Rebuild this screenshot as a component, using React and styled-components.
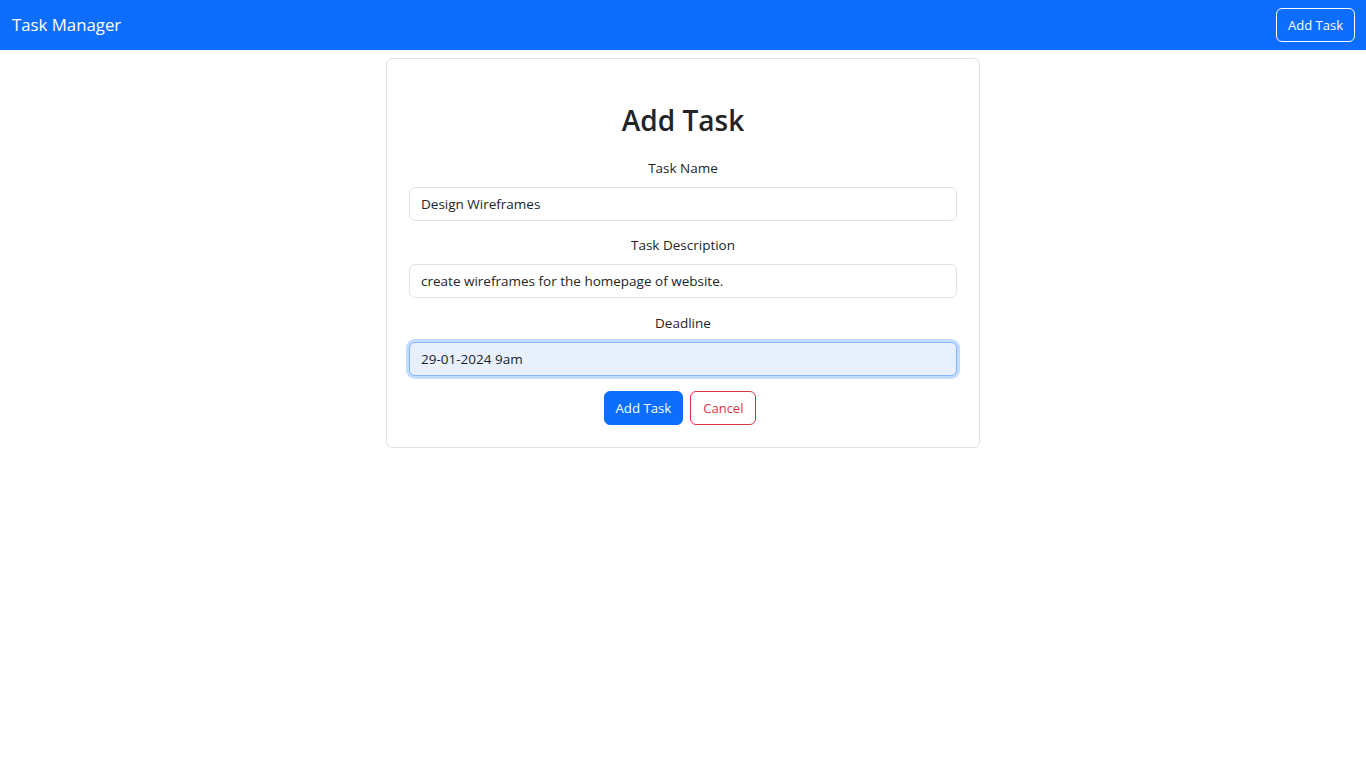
import React, { useState } from "react";
import styled, { createGlobalStyle } from "styled-components";

const GlobalStyle = createGlobalStyle`
  * {
    box-sizing: border-box;
  }
  body {
    margin: 0;
    background: #fff;
    font-family: "Open Sans", "Noto Sans", "Liberation Sans", sans-serif;
    color: #212529;
  }
`;

const Navbar = styled.nav`
  height: 50px;
  background-color: #0d6efd;
  display: flex;
  align-items: center;
  justify-content: space-between;
  padding: 0 11px 0 12px;
`;

const Brand = styled.span`
  color: #fff;
  font-size: 16.8px;
  line-height: 1;
`;

const OutlineButton = styled.button`
  height: 34px;
  padding: 0 ${(p) => p.$px || "11px"};
  border-radius: 6px;
  font-family: inherit;
  font-size: 13px;
  cursor: pointer;
  background: transparent;
  border: 1px solid ${(p) => p.$color};
  color: ${(p) => p.$color};
`;

const PrimaryButton = styled.button`
  height: 34px;
  padding: 0 11px;
  border-radius: 6px;
  font-family: inherit;
  font-size: 13.2px;
  cursor: pointer;
  background: #0d6efd;
  border: 1px solid #0d6efd;
  color: #fff;
`;

const Main = styled.main`
  display: flex;
  justify-content: center;
  padding-top: 8px;
`;

const Card = styled.div`
  width: 594px;
  border: 1px solid #dee2e6;
  border-radius: 6px;
  padding: 42px 22px 22px;
  display: flex;
  flex-direction: column;
  align-items: stretch;
`;

const Title = styled.h2`
  margin: 0 0 19px;
  text-align: center;
  font-size: 28px;
  font-weight: 600;
  line-height: 38px;
`;

const Field = styled.div`
  display: flex;
  flex-direction: column;
  margin-bottom: ${(p) => p.$gap};
`;

const Label = styled.label`
  text-align: center;
  font-size: 13.5px;
  line-height: 21px;
  margin-bottom: 8px;
`;

const Input = styled.input`
  height: 34px;
  padding: 0 11px;
  font-family: inherit;
  font-size: 13.5px;
  color: #212529;
  border-radius: 6px;
  border: 1px solid ${(p) => (p.$focused ? "#86b7fe" : "#dee2e6")};
  background: ${(p) => (p.$focused ? "#e8f0fe" : "#fff")};
  box-shadow: ${(p) => (p.$focused ? "0 0 0 3px rgba(13, 110, 253, 0.25)" : "none")};
  outline: none;
`;

const Actions = styled.div`
  display: flex;
  justify-content: center;
  gap: 7px;
  margin-right: 6px;
`;

export default function App() {
  const [name, setName] = useState("Design Wireframes");
  const [desc, setDesc] = useState("create wireframes for the homepage of website.");
  const [deadline, setDeadline] = useState("29-01-2024 9am");

  return (
    <>
      <GlobalStyle />
      <Navbar>
        <Brand>Task Manager</Brand>
        <OutlineButton $color="#fff">Add Task</OutlineButton>
      </Navbar>
      <Main>
        <Card>
          <Title>Add Task</Title>
          <Field $gap="14px">
            <Label>Task Name</Label>
            <Input value={name} onChange={(e) => setName(e.target.value)} />
          </Field>
          <Field $gap="15px">
            <Label>Task Description</Label>
            <Input value={desc} onChange={(e) => setDesc(e.target.value)} />
          </Field>
          <Field $gap="15px">
            <Label>Deadline</Label>
            <Input $focused value={deadline} onChange={(e) => setDeadline(e.target.value)} />
          </Field>
          <Actions>
            <PrimaryButton>Add Task</PrimaryButton>
            <OutlineButton $color="#dc3545" $px="12px">Cancel</OutlineButton>
          </Actions>
        </Card>
      </Main>
    </>
  );
}
